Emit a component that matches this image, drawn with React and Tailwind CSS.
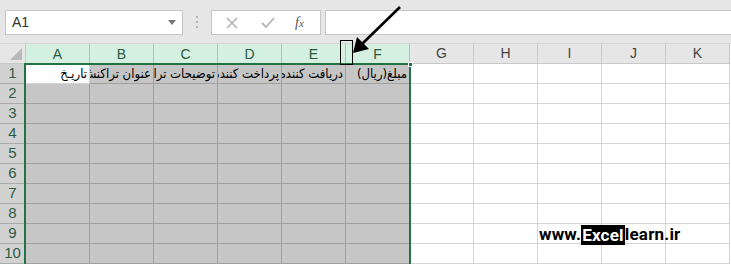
import { useState } from 'react';

const cols = ['A', 'B', 'C', 'D', 'E', 'F', 'G', 'H', 'I', 'J', 'K'];
const rows = [1, 2, 3, 4, 5, 6, 7, 8, 9, 10];
const header = ['تاریـخ', 'عنوان تراکنش', 'توضیحات تراکنش', 'پرداخت کننده', 'دریافت کننده', 'مبلغ(ریال)'];

export default function App() {
  const [active] = useState('A1');

  return (
    <div className="relative w-[731px] h-[264px] overflow-hidden bg-white font-['Liberation_Sans',sans-serif]">
      {/* Name box + formula bar */}
      <div className="flex items-start h-[44px] bg-[#e6e6e6] pt-[10px] pl-[5px] border-b border-[#d4d4d4]">
        <div className="flex items-center justify-between w-[178px] h-[25px] bg-white border border-[#c6c6c6] pl-[6px] pr-[6px]">
          <span className="text-[14px] text-[#333]">{active}</span>
          <svg width="8" height="5" viewBox="0 0 8 5"><path d="M0 0h8L4 5z" fill="#777" /></svg>
        </div>
        <div className="flex flex-col gap-[3px] ml-[13px] mt-[6px]">
          <span className="w-[2px] h-[2px] bg-[#b5b5b5]" />
          <span className="w-[2px] h-[2px] bg-[#b5b5b5]" />
          <span className="w-[2px] h-[2px] bg-[#b5b5b5]" />
        </div>
        <div className="flex items-center w-[110px] h-[25px] ml-[13px] bg-white border border-[#c6c6c6]">
          <svg className="ml-[14px]" width="12" height="12" viewBox="0 0 12 12"><path d="M1 1l10 10M11 1L1 11" stroke="#b3b3b3" strokeWidth="1.6" /></svg>
          <svg className="ml-[23px]" width="14" height="11" viewBox="0 0 14 11"><path d="M1 6l4 4 8-9" stroke="#b3b3b3" strokeWidth="1.8" fill="none" /></svg>
          <span className="ml-[20px] text-[14px] italic text-[#555] font-['Liberation_Serif',serif]">f<span className="text-[11px]">x</span></span>
        </div>
        <div className="flex-1 h-[25px] ml-[4px] bg-white border border-[#c6c6c6] border-r-0" />
      </div>

      {/* Sheet */}
      <div className="grid grid-cols-[26px_repeat(11,64px)] text-[14px]">
        <div className="h-[20px] bg-[#e6e6e6] border-r border-b border-[#c8c8c8] flex items-end justify-end p-[3px]">
          <svg width="12" height="12" viewBox="0 0 12 12"><path d="M12 0V12H0z" fill="#b9b9b9" /></svg>
        </div>
        {cols.map((c, i) => (
          <div
            key={c}
            className={`h-[20px] flex items-center justify-center border-r ${
              i < 6 ? 'bg-[#d3f0e0] text-[#2b5a40] border-[#a9c7b5]' : 'bg-[#e6e6e6] text-[#444] border-[#c8c8c8] border-b'
            }`}
          >
            {c}
          </div>
        ))}

        {rows.map(r => (
          <div key={r} className="contents">
            <div className="h-[20px] bg-[#d2d2d2] text-[#2f5b45] text-[15px] border-r border-b border-[#ababab] flex items-center justify-center">
              {r}
            </div>
            {cols.map((c, i) => {
              const selected = i < 6;
              const isActive = r === 1 && i === 0;
              const text = r === 1 && i < 6 ? header[i] : '';
              return (
                <div
                  key={c}
                  dir="rtl"
                  className={`h-[20px] overflow-hidden whitespace-nowrap border-r border-b px-[2px] text-[13px] leading-[19px] font-['DejaVu_Sans_Condensed','DejaVu_Sans',sans-serif] text-black ${
                    isActive ? 'bg-white border-[#d4d4d4]' : selected ? 'bg-[#c6c6c6] border-[#9f9f9f]' : 'bg-white border-[#d4d4d4]'
                  }`}
                >
                  {text}
                </div>
              );
            })}
          </div>
        ))}
      </div>

      {/* selection border */}
      <div className="absolute left-[24px] top-[63px] w-[387px] h-[220px] border-2 border-[#217346]" />
      <div className="absolute left-[408px] top-[62px] w-[5px] h-[5px] bg-[#217346] border border-white" />

      {/* arrow + marker */}
      <svg className="absolute left-0 top-0" width="731" height="264" viewBox="0 0 731 264">
        <rect x="340.5" y="40.5" width="12" height="24" fill="none" stroke="#000" strokeWidth="1" />
        <path d="M400 7L362 44" stroke="#000" strokeWidth="2.6" />
        <path d="M353 53L357 37L369 49z" fill="#000" />
      </svg>

      {/* watermark */}
      <div className="absolute left-[539px] top-[222px] flex items-center text-[17px] font-bold text-black font-['Roboto',sans-serif] tracking-[0.2px]">
        <span>www.</span>
        <span className="bg-black text-white px-[1px] leading-[20px]">Excel</span>
        <span>learn.ir</span>
      </div>
    </div>
  );
}
